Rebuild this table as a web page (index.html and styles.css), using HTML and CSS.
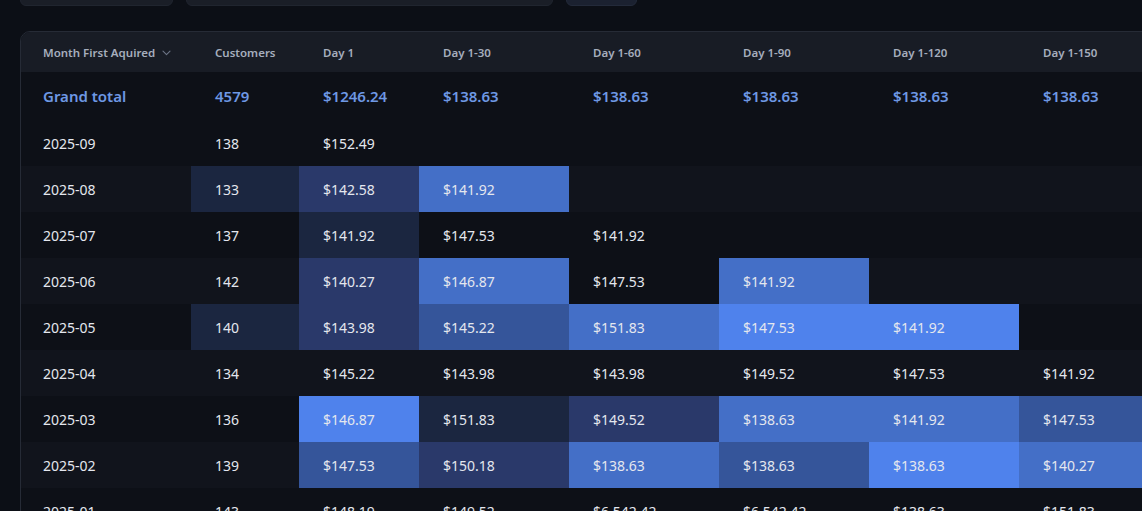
FILE: index.html
```html
<!DOCTYPE html>
<html lang="en">
<head>
<meta charset="utf-8">
<title>Cohort LTV</title>
<link rel="stylesheet" href="styles.css">
</head>
<body>
<div class="toolbar">
  <div class="ctl ctl-a"></div>
  <div class="ctl ctl-b"></div>
  <div class="ctl ctl-c"></div>
</div>
<div class="card">
  <table class="grid">
    <colgroup>
      <col class="c-month"><col class="c-cust"><col class="c-d1"><col class="c-wide"><col class="c-wide"><col class="c-wide"><col class="c-wide"><col class="c-wide">
    </colgroup>
    <thead>
      <tr>
        <th class="first">Month First Aquired <svg class="chev" width="9" height="6" viewBox="0 0 9 6"><path d="M1 1.2 L4.5 4.6 L8 1.2" fill="none" stroke="#6c7486" stroke-width="1.1" stroke-linecap="round" stroke-linejoin="round"/></svg></th>
        <th>Customers</th>
        <th>Day 1</th>
        <th>Day 1-30</th>
        <th>Day 1-60</th>
        <th>Day 1-90</th>
        <th>Day 1-120</th>
        <th>Day 1-150</th>
      </tr>
    </thead>
    <tbody>
      <tr class="total">
        <td class="first">Grand total</td><td>4579</td><td>$1246.24</td><td>$138.63</td><td>$138.63</td><td>$138.63</td><td>$138.63</td><td>$138.63</td>
      </tr>
      <tr class="odd">
        <td class="first">2025-09</td><td>138</td><td>$152.49</td><td></td><td></td><td></td><td></td><td></td>
      </tr>
      <tr class="even">
        <td class="first">2025-08</td><td class="h1">133</td><td class="h2">$142.58</td><td class="h4">$141.92</td><td></td><td></td><td></td><td></td>
      </tr>
      <tr class="odd">
        <td class="first">2025-07</td><td>137</td><td class="h1">$141.92</td><td>$147.53</td><td>$141.92</td><td></td><td></td><td></td>
      </tr>
      <tr class="even">
        <td class="first">2025-06</td><td>142</td><td class="h2">$140.27</td><td class="h4">$146.87</td><td class="blank">$147.53</td><td class="h4">$141.92</td><td></td><td></td>
      </tr>
      <tr class="odd">
        <td class="first">2025-05</td><td class="h1">140</td><td class="h2">$143.98</td><td class="h3">$145.22</td><td class="h4">$151.83</td><td class="h5">$147.53</td><td class="h5">$141.92</td><td></td>
      </tr>
      <tr class="even">
        <td class="first">2025-04</td><td>134</td><td>$145.22</td><td>$143.98</td><td>$143.98</td><td>$149.52</td><td>$147.53</td><td>$141.92</td>
      </tr>
      <tr class="odd">
        <td class="first">2025-03</td><td>136</td><td class="h5">$146.87</td><td class="h1">$151.83</td><td class="h2">$149.52</td><td class="h4">$138.63</td><td class="h4">$141.92</td><td class="h3">$147.53</td>
      </tr>
      <tr class="even">
        <td class="first">2025-02</td><td>139</td><td class="h3">$147.53</td><td class="h2">$150.18</td><td class="h4">$138.63</td><td class="h3">$138.63</td><td class="h5">$138.63</td><td class="h4">$140.27</td>
      </tr>
      <tr class="odd">
        <td class="first">2025-01</td><td>143</td><td>$148.19</td><td>$149.52</td><td>$6,542.42</td><td>$6,542.42</td><td>$138.63</td><td>$151.83</td>
      </tr>
    </tbody>
  </table>
</div>
</body>
</html>
```

FILE: styles.css
```css
html, body {
  margin: 0;
  padding: 0;
  background: #0c0f16;
  overflow: hidden;
  height: 511px;
}
body {
  font-family: "Noto Sans", "DejaVu Sans", sans-serif;
  color: #e4e7ee;
  padding: 0 0 0 20px;
}
.toolbar {
  display: flex;
  gap: 13px;
  height: 36px;
  margin-top: -30px;
}
.ctl {
  height: 36px;
  border-radius: 6px;
  background: #1a1e27;
  border: 1px solid #20252f;
  box-sizing: border-box;
}
.ctl-a { width: 153px; }
.ctl-b { width: 367px; }
.ctl-c { width: 71px; background: #1b2130; border-color: #232a3a; }

.card {
  margin-top: 25px;
  width: 1148px;
  border: 1px solid #262b36;
  border-radius: 10px;
  overflow: hidden;
  background: #0d1017;
}
.grid {
  border-collapse: collapse;
  table-layout: fixed;
  width: 1148px;
}
.c-month { width: 170px; }
.c-cust { width: 108px; }
.c-d1 { width: 120px; }
.c-wide { width: 150px; }

th, td {
  text-align: left;
  padding: 0 0 0 24px;
  white-space: nowrap;
  overflow: hidden;
}
th.first, td.first { padding-left: 22px; }

thead tr { background: #181c25; height: 40px; }
th {
  font-size: 11.5px;
  font-weight: 600;
  color: #a6aebd;
}
.chev { margin-left: 4px; vertical-align: 1px; }

.total { height: 48px; background: #0d1017; }
.total td {
  font-size: 15px;
  font-weight: 600;
  color: #6e98e4;
}
tbody tr.odd, tbody tr.even { height: 46px; }
tbody tr.odd { background: #0d1017; }
tbody tr.even { background: #11141c; }
tbody tr.odd td, tbody tr.even td {
  font-size: 14px;
  color: #e4e7ee;
}

.h1 { background: #1b2640; }
.h2 { background: #2a396a; }
.h3 { background: #35559a; }
.h4 { background: #446fc7; }
.h5 { background: #4f82ec; }
.blank { background: #0d1017; }
```
